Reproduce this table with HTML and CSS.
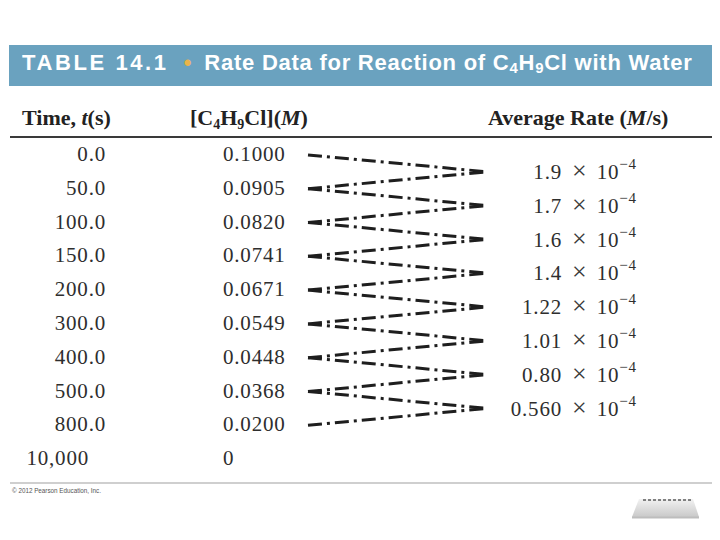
FILE: index.html
```html
<!DOCTYPE html>
<html>
<head>
<meta charset="utf-8">
<link rel="stylesheet" href="styles.css">
</head>
<body>
<div class="slide">
  <div class="titlebar">
    <span class="tlabel">TABLE 14.1</span><span class="bullet">•</span><span class="ttext">Rate Data for Reaction of C<sub>4</sub>H<sub>9</sub>Cl with Water</span>
  </div>
  <div class="colheads">
    <div class="h-time">Time, <i>t</i>(s)</div>
    <div class="h-conc">[C<sub>4</sub>H<sub>9</sub>Cl](<i>M</i>)</div>
    <div class="h-rate">Average Rate (<i>M</i>/s)</div>
  </div>
  <div class="rule"></div>
  <div class="tbody">
    <div class="col-time">
      <div class="cell">0.0</div>
      <div class="cell">50.0</div>
      <div class="cell">100.0</div>
      <div class="cell">150.0</div>
      <div class="cell">200.0</div>
      <div class="cell">300.0</div>
      <div class="cell">400.0</div>
      <div class="cell">500.0</div>
      <div class="cell">800.0</div>
      <div class="cell int">10,000</div>
    </div>
    <div class="col-conc">
      <div class="cell">0.1000</div>
      <div class="cell">0.0905</div>
      <div class="cell">0.0820</div>
      <div class="cell">0.0741</div>
      <div class="cell">0.0671</div>
      <div class="cell">0.0549</div>
      <div class="cell">0.0448</div>
      <div class="cell">0.0368</div>
      <div class="cell">0.0200</div>
      <div class="cell">0</div>
    </div>
    <svg class="fan" width="185" height="338" viewBox="0 0 185 338">
      <g stroke="#1e1e1e" stroke-width="3" stroke-dasharray="14 5 3 5" fill="none">
        <line x1="3" y1="16.9" x2="182" y2="33.8"/>
        <line x1="3" y1="50.7" x2="182" y2="33.8"/>
        <line x1="3" y1="50.7" x2="182" y2="67.6"/>
        <line x1="3" y1="84.5" x2="182" y2="67.6"/>
        <line x1="3" y1="84.5" x2="182" y2="101.4"/>
        <line x1="3" y1="118.3" x2="182" y2="101.4"/>
        <line x1="3" y1="118.3" x2="182" y2="135.2"/>
        <line x1="3" y1="152.1" x2="182" y2="135.2"/>
        <line x1="3" y1="152.1" x2="182" y2="169"/>
        <line x1="3" y1="185.9" x2="182" y2="169"/>
        <line x1="3" y1="185.9" x2="182" y2="202.8"/>
        <line x1="3" y1="219.7" x2="182" y2="202.8"/>
        <line x1="3" y1="219.7" x2="182" y2="236.6"/>
        <line x1="3" y1="253.5" x2="182" y2="236.6"/>
        <line x1="3" y1="253.5" x2="182" y2="270.4"/>
        <line x1="3" y1="287.3" x2="182" y2="270.4"/>
      </g>
    </svg>
    <div class="col-rate">
      <div class="rate"><span class="num">1.9</span><span class="x">×</span><span>10</span><span class="exp">−4</span></div>
      <div class="rate"><span class="num">1.7</span><span class="x">×</span><span>10</span><span class="exp">−4</span></div>
      <div class="rate"><span class="num">1.6</span><span class="x">×</span><span>10</span><span class="exp">−4</span></div>
      <div class="rate"><span class="num">1.4</span><span class="x">×</span><span>10</span><span class="exp">−4</span></div>
      <div class="rate"><span class="num">1.22</span><span class="x">×</span><span>10</span><span class="exp">−4</span></div>
      <div class="rate"><span class="num">1.01</span><span class="x">×</span><span>10</span><span class="exp">−4</span></div>
      <div class="rate"><span class="num">0.80</span><span class="x">×</span><span>10</span><span class="exp">−4</span></div>
      <div class="rate"><span class="num">0.560</span><span class="x">×</span><span>10</span><span class="exp">−4</span></div>
    </div>
  </div>
  <div class="footrule"></div>
  <div class="copyright">© 2012 Pearson Education, Inc.</div>
  <svg class="nav" width="70" height="24" viewBox="0 0 70 24">
    <defs>
      <linearGradient id="g" x1="0" y1="0" x2="0" y2="1">
        <stop offset="0" stop-color="#f2f2f2"/>
        <stop offset="1" stop-color="#c9c9c9"/>
      </linearGradient>
    </defs>
    <polygon points="8,2 62,2 68,20 1,20" fill="url(#g)"/>
    <line x1="1" y1="20.5" x2="68" y2="20.5" stroke="#bdbdbd" stroke-width="2"/>
    <line x1="12" y1="3" x2="60" y2="3" stroke="#111" stroke-width="1" stroke-dasharray="3 2"/>
  </svg>
</div>
</body>
</html>
```
FILE: styles.css
```css
html, body {
  margin: 0;
  padding: 0;
  background: #ffffff;
}
.slide {
  position: relative;
  width: 720px;
  height: 540px;
  padding-top: 45px;
  box-sizing: border-box;
}
.titlebar {
  margin-left: 9px;
  width: 703px;
  height: 41px;
  box-sizing: border-box;
  padding: 0 0 6px 13px;
  background: #6aa2bf;
  color: #ffffff;
  font-family: "Liberation Sans", Arial, sans-serif;
  font-weight: bold;
  font-size: 22px;
  line-height: 35px;
  white-space: nowrap;
}
.titlebar sub {
  font-size: 15px;
  vertical-align: -3px;
  line-height: 0;
}
.tlabel {
  letter-spacing: 2.6px;
}
.ttext {
  letter-spacing: 0.75px;
}
.bullet {
  color: #e9b44c;
  margin: 0 13px 0 15px;
}
.colheads {
  display: flex;
  padding: 20px 0 6px 22px;
  height: 24px;
  font-family: "Liberation Serif", "Times New Roman", serif;
  font-weight: bold;
  font-size: 22px;
  line-height: 24px;
  color: #222;
  white-space: nowrap;
}
.colheads sub {
  font-size: 14px;
  vertical-align: -4px;
  line-height: 0;
}
.h-time { width: 168px; }
.h-conc { width: 298px; }
.rule {
  margin-left: 10px;
  width: 702px;
  height: 2px;
  background: #3a3a3a;
}
.tbody {
  display: flex;
  height: 338px;
  font-family: "Liberation Serif", "Times New Roman", serif;
  font-size: 21px;
  letter-spacing: 0.8px;
  color: #2e2e2e;
}
.cell, .rate {
  height: 33.8px;
  line-height: 33.8px;
  white-space: nowrap;
}
.col-time {
  width: 106px;
  text-align: right;
}
.col-time .int {
  padding-right: 17px;
}
.col-conc {
  width: 82px;
  margin-left: 117px;
}
.fan {
  display: block;
  flex: none;
}
.col-rate {
  padding-top: 16px;
}
.rate {
  display: flex;
  align-items: baseline;
}
.num {
  width: 72px;
  text-align: right;
}
.x {
  font-size: 26px;
  letter-spacing: 0;
  margin: 0 10px 0 10px;
  color: #3a3a3a;
}
.exp {
  font-size: 15px;
  position: relative;
  top: -10px;
}
.footrule {
  margin: 6px 0 0 10px;
  width: 702px;
  height: 2px;
  background: #cfcfcf;
}
.copyright {
  margin: 3px 0 0 12px;
  font-family: "Liberation Sans", Arial, sans-serif;
  font-size: 6.3px;
  color: #555;
}
.nav {
  position: absolute;
  left: 631px;
  top: 497px;
}
```
